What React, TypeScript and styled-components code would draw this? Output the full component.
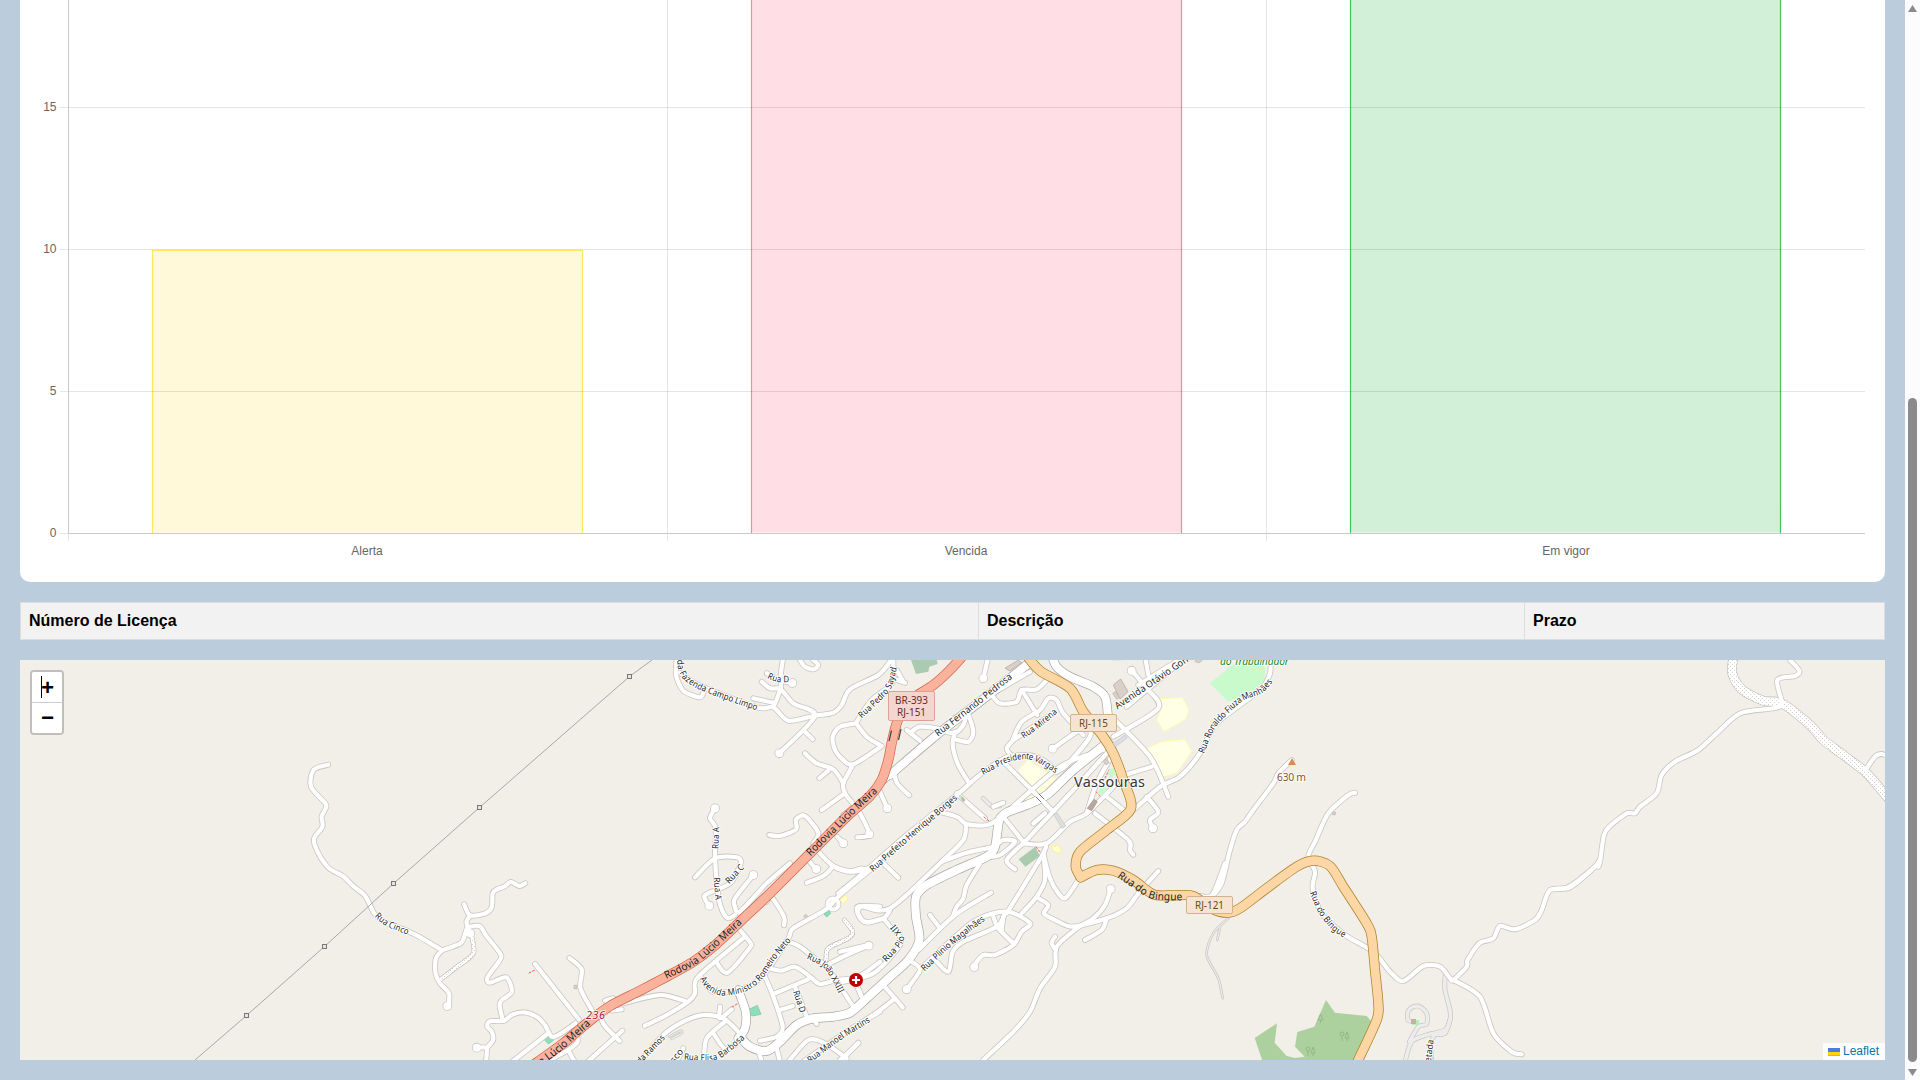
import React from "react";
import styled, { createGlobalStyle } from "styled-components";

const GlobalStyle = createGlobalStyle`
  * { box-sizing: border-box; }
  html, body { margin: 0; padding: 0; overflow: hidden; }
  body { background: #bbccdc; font-family: "Liberation Sans", Arial, sans-serif; color: #000; }
`;

const Screen = styled.div`
  display: flex;
  width: 1920px;
  height: 1080px;
  overflow: hidden;
`;

const Content = styled.main`
  flex: 1;
  min-width: 0;
  display: flex;
  flex-direction: column;
  gap: 20px;
  padding: 0 20px 20px;
`;

const ChartCard = styled.section`
  height: 582px;
  background: #fff;
  border-radius: 0 0 10px 10px;
  overflow: hidden;
`;

const ChartSvg = styled.svg`
  display: block;
  font: 12px "Liberation Sans", Arial, sans-serif;
  fill: #666;
`;

const LicenseTable = styled.div`
  display: grid;
  grid-template-columns: 957px 546px 1fr;
  height: 38px;
  border: 1px solid #ddd;
  background: #f2f2f2;
`;

const HeaderCell = styled.div<{ $divided?: boolean }>`
  display: flex;
  align-items: center;
  padding: 0 8px 1px;
  font-size: 16px;
  font-weight: 700;
  line-height: 18px;
  border-left: ${(p) => (p.$divided ? "1px solid #ddd" : "0")};
`;

const MapPane = styled.section`
  position: relative;
  height: 400px;
  background: #f2efe9;
  overflow: hidden;
`;

const MapSvg = styled.svg`
  display: block;
  width: 1865px;
  height: 400px;
  font-family: "Noto Sans", sans-serif;
`;

const ZoomControl = styled.div`
  position: absolute;
  left: 10px;
  top: 10px;
  width: 34px;
  border: 2px solid rgba(0, 0, 0, 0.2);
  border-radius: 4px;
  background-clip: padding-box;
`;

const ZoomButton = styled.div<{ $top?: boolean }>`
  display: flex;
  align-items: center;
  justify-content: center;
  height: ${(p) => (p.$top ? 31 : 30)}px;
  padding-top: ${(p) => (p.$top ? 5 : 4)}px;
  background: #fff;
  border-bottom: ${(p) => (p.$top ? "1px solid #ccc" : "0")};
  border-radius: ${(p) => (p.$top ? "2px 2px 0 0" : "0 0 2px 2px")};
  font: bold 22px/26px "Liberation Mono", monospace;
  text-indent: 1px;
`;

const Caret = styled.span`
  position: absolute;
  left: 9px;
  top: 4px;
  width: 1px;
  height: 22px;
  background: #000;
`;

const Attribution = styled.div`
  position: absolute;
  right: 0;
  bottom: 0;
  display: flex;
  align-items: center;
  gap: 3px;
  width: 62px;
  height: 17px;
  padding-left: 5px;
  background: rgba(255, 255, 255, 0.8);
  color: #0078a8;
  font-size: 12px;
  line-height: 17px;
`;

const Flag = styled.span`
  width: 12px;
  height: 8px;
  background: linear-gradient(#4c7be1 50%, #ffd500 50% 88%, #e0bc00 88%);
`;

const Scrollbar = styled.aside`
  width: 15px;
  height: 1080px;
  padding: 5px 3px 4px;
  display: flex;
  flex-direction: column;
  align-items: center;
  background: #fcfcfc;
`;

const Arrow = styled.span<{ $down?: boolean }>`
  width: 9px;
  height: 7px;
  background: #8b8b8b;
  clip-path: ${(p) => (p.$down ? "polygon(0 0, 100% 0, 50% 100%)" : "polygon(50% 0, 100% 100%, 0 100%)")};
`;

const Thumb = styled.span`
  width: 9px;
  height: 664px;
  margin: 386px 0 7px;
  border-radius: 5px;
  background: #8b8b8b;
`;

/* ---------- chart ---------- */

const bars = [
  { label: "Alerta", x: 152, top: 250, fill: "#fff8d9", line: "#ffe566", cx: 367 },
  { label: "Vencida", x: 751, top: -20, fill: "#ffdfe5", line: "#ff86a0", cx: 966 },
  { label: "Em vigor", x: 1350, top: -20, fill: "#d2f0d7", line: "#42c55c", cx: 1566 },
];
const ticks = [
  { value: 15, y: 107 },
  { value: 10, y: 249 },
  { value: 5, y: 391 },
  { value: 0, y: 533 },
];

const BarChart = () => (
  <ChartSvg width="1865" height="582" viewBox="20 0 1865 582">
    {bars.map((b) => (
      <g key={b.label}>
        <rect x={b.x} y={b.top - 0.5} width={431} height={533 - b.top} fill={b.fill} />
        <path
          d={`M${b.x + 0.5} 533V${b.top + 0.5}H${b.x + 430.5}V533`}
          fill="none"
          stroke={b.line}
          strokeWidth="1.2"
        />
        <text x={b.cx} y="555" textAnchor="middle">{b.label}</text>
      </g>
    ))}
    {ticks.map((t) => (
      <g key={t.value}>
        <rect x="60" y={t.y} width={t.value ? 1805 : 8} height="1" fill="rgba(0,0,0,.1)" />
        <text x="56.5" y={t.y + 4} textAnchor="end">{t.value}</text>
      </g>
    ))}
    {[667, 1266].map((x) => (
      <rect key={x} x={x} y="0" width="1" height="541" fill="rgba(0,0,0,.1)" />
    ))}
    <rect x="68" y="533" width="1" height="8" fill="#e5e5e5" />
    <rect x="68" y="0" width="1" height="533" fill="#c9c9c9" />
    <rect x="68" y="533" width="1797" height="1" fill="#c9c9c9" />
  </ChartSvg>
);

/* ---------- map ---------- */

type Pt = [number, number];
type SectorId = "west" | "rodovia" | "centro" | "bingue" | "leste";

// Each sector has its own local grid; kx and ky are grid units per screen pixel.
const sectors: Record<SectorId, { x: number; y: number; kx: number; ky: number }> = {
  west: { x: 0, y: 560, kx: 2.45, ky: 3 },
  rodovia: { x: 480, y: 650, kx: 3, ky: 3 },
  centro: { x: 840, y: 650, kx: 3, ky: 3 },
  bingue: { x: 1200, y: 650, kx: 3, ky: 3 },
  leste: { x: 1560, y: 640, kx: 3, ky: 3 },
};

const project = (s: SectorId, pts: string): Pt[] =>
  pts.split(" ").map((p) => {
    const [x, y] = p.split(",").map(Number);
    const o = sectors[s];
    return [o.x + x / o.kx, o.y + y / o.ky];
  });

const smooth = (p: Pt[]): string => {
  let d = `M${p[0][0].toFixed(1)} ${p[0][1].toFixed(1)}`;
  const t = 0.14;
  for (let i = 0; i < p.length - 1; i++) {
    const a = p[Math.max(i - 1, 0)], b = p[i], c = p[i + 1], e = p[Math.min(i + 2, p.length - 1)];
    const n = [
      b[0] + (c[0] - a[0]) * t, b[1] + (c[1] - a[1]) * t,
      c[0] - (e[0] - b[0]) * t, c[1] - (e[1] - b[1]) * t,
      c[0], c[1],
    ].map((v) => v.toFixed(1));
    d += `C${n.join(" ")}`;
  }
  return d;
};

const lengthOf = (p: Pt[]) =>
  p.slice(1).reduce((s, q, i) => s + Math.hypot(q[0] - p[i][0], q[1] - p[i][1]), 0);

const minor: Record<SectorId, string[]> = {
  west: [
    "804,614 768,630 762,680 797,730 798,745 788,770 790,800 769,838 780,880 806,925 840,948 865,978 895,1008 918,1062 950,1090 1000,1114 1030,1132 1083,1171",
    "1083,1171 1130,1148 1145,1105 1175,1098 1190,1125 1225,1180 1225,1200 1195,1250 1200,1268 1240,1252 1254,1295 1230,1320 1224,1335 1232,1382",
    "1137,1033 1152,1066 1190,1060 1205,1040 1207,1000 1218,988 1235,980 1252,966 1272,978 1287,970",
    "1152,1066 1143,1085 1147,1105",
    "1083,1171 1068,1195 1067,1240 1078,1270 1100,1300 1099,1330",
    "1190,1510 1192,1465 1168,1464",
    "1192,1465 1208,1440 1205,1415 1194,1400 1200,1384 1235,1382 1255,1364 1285,1357 1315,1370 1335,1395 1352,1430 1375,1420 1410,1390",
    "1250,1510 1345,1418", "1311,1212 1418,1378", "1395,1194 1425,1228 1422,1285 1450,1350",
    "1470,1360 1480,1395 1518,1443", "1440,1505 1525,1412", "1340,1505 1392,1470 1415,1445 1412,1420", "1392,1470 1410,1510",
  ],
  rodovia: [
    "590,28 588,75 610,122 660,142 672,120", "600,68 655,105 830,172 880,172 925,212 1000,198 1060,188 1085,165 1110,118 1195,75 1230,35 1240,20",
    "910,20 902,75 902,115 880,172", "860,70 895,90 935,98", "845,95 870,115 902,118 940,160 1005,198 898,310", "972,242 998,268",
    "880,158 820,145", "960,30 975,50 1000,58 1015,45 1000,30", "1250,60 1270,95", "1130,215 1175,150 1235,100 1240,30",
    "1128,220 1080,230 1058,260 1065,300 1090,330 1120,343 1205,288", "1128,220 1160,260 1200,285", "1120,343 1090,400 1095,430 1118,460",
    "975,310 1010,340 1060,358 1090,400", "1045,362 1018,385", "1095,430 1025,480", "1135,480 1168,552 1132,562", "1072,560 1090,580",
    "868,555 900,558 948,538 948,508 975,498 1015,548 1000,580", "705,475 690,505 707,535 705,625 715,740 728,785 745,805 765,795",
    "645,682 705,625 770,622 782,640 750,700 680,732 674,745 688,768", "820,675 765,745 765,770 780,785 860,700 930,640",
    "860,755 875,742 912,800 912,826", "985,630 1010,660", "1010,600 1060,648 1120,665 1165,655", "980,698 1030,678 1060,648",
    "780,840 812,880 808,895 742,968 708,935", "795,860 655,980 645,1030 625,1055 560,1095 495,1127", "430,1060 540,1035 620,1055",
    "375,1052 400,1045", "395,1082 425,1078",
    "1200,635 1080,735 1035,780 940,835 925,865 850,975 780,1020 700,1025 665,985", "925,875 960,890 1010,930 1040,950 1120,1070",
    "870,955 905,962 945,950 990,980 1020,1002 1070,990 1120,985 1160,965 1200,935", "855,980 880,1040 908,1130 890,1160 840,1172",
    "880,1032 985,988", "945,1010 980,1100", "900,1080 938,1068", "1130,1005 1145,1040", "1050,940 1100,915 1165,887",
    "480,1235 550,1155 610,1115 670,1095 730,1105 770,1140 800,1180", "720,1070 720,1105 755,1078", "735,1115 680,1165 672,1230", "700,1150 740,1200 790,1160",
    "590,1235 610,1195", "925,1235 985,1170 1035,1180 1100,1225", "970,1235 1100,1145 1200,1085", "1090,1225 1135,1178", "1000,1105 1010,1122", "835,1200 845,1235", "890,1195 900,1235",
    "1200,770 1150,768 1132,785 1145,810 1165,818 1200,808",
  ],
  centro: [
    "445,20 430,85", "200,240 240,272", "215,245 240,230 290,235 340,250 370,225 382,190 400,245 385,275 345,268", "345,245 338,285 355,345 388,400",
    "160,360 172,400 208,436", "120,425 142,475", "455,135 480,160 530,155 545,120 590,118 625,85", "545,120 592,195", "570,65 510,100 460,130",
    "520,265 545,215 600,180 625,145 650,150 670,190 730,255", "520,270 640,190", "520,270 500,295 510,312", "640,295 730,235 750,260 680,345 650,365",
    "-5,730 80,660 200,555 350,435 425,370 500,322 560,315 610,330 650,365", "-10,655 30,665 65,655 80,665", "130,640 175,683",
    "350,430 435,505", "295,485 350,500 380,522 440,525 490,495 660,350 790,300", "485,330 600,445 640,485", "490,500 550,575", "460,470 490,458",
    "580,520 615,490", "550,580 700,420 800,310", "550,580 620,580 690,515 740,490 830,400", "615,580 610,610 500,790", "550,580 500,630 525,658",
    "305,635 380,608 460,590 490,570 525,575 480,615 440,622", "378,525 370,570 305,635 150,775 60,768 52,785 75,815 130,805 150,780",
    "130,805 155,835 180,860 180,885 130,945 90,975 -10,1000", "420,640 380,705 370,745 350,770 340,795", "235,900 345,795 453,728", "270,795 300,835",
    "610,610 625,670 645,715 675,745 715,690", "610,610 615,690 590,740 545,790", "590,742 625,765 612,790 655,815 700,830 800,805 860,775 895,730 955,663",
    "812,717 795,765 760,805 715,832 650,890 645,950 600,1015 570,1085 520,1145 430,1230", "645,860 635,880 648,900", "800,805 785,840 735,870",
    "248,950 400,815 500,785 570,820 545,845 520,885 465,915 430,915 403,945", "285,930 325,965 338,905 370,875 470,830 495,790", "460,800 475,835 520,880", "490,800 485,840",
    "215,935 240,960 200,1018", "130,1005 188,1072", "165,1045 100,1095 -10,1165", "0,1230 55,1180", "50,1005 65,1040", "0,905 85,885",
    "800,185 930,320 985,440", "820,260 955,175 920,115 875,62", "895,105 1080,-10", "860,170 1040,20", "925,75 915,20", "820,22 840,22", "165,88 195,98",
    "855,375 935,350", "870,490 960,410 1020,380 1080,310 1130,220 1260,120 1290,70 1290,20", "920,440 955,485 930,510 940,535", "800,440 850,480", "765,490 865,570 870,600 880,614",
    "820,310 770,400 740,490", "1120,735 1145,700 1170,600 1190,540 1215,515 1240,480 1300,400 1315,370 1355,330",
  ],
  bingue: [
    "465,428 445,435 385,490 345,575 325,620 345,665 338,715 365,790 435,855 520,905 570,965 610,993 670,948 720,950 750,985 760,990 800,950 803,930 838,880 880,865 900,828 945,838 1005,810 1025,780 1050,720 1110,712 1180,655 1200,630",
    "760,990 840,1040 880,1150 935,1205 965,1213", "0,738 30,740 45,720 75,640",
  ],
  leste: [
    "115,680 120,665 132,585 150,558 200,520 225,520 240,500 290,460 305,405 345,365 415,330 470,280 540,220 640,205 665,190 652,120 705,108 718,92 690,60",
    "-20,748 20,743 50,725 115,672", "918,388 945,350 965,342 985,350",
  ],
};

const culs: [SectorId, string][] = [
  ["west", "1096,1338 1168,1463 1152,1120"],
  ["rodovia", "705,475 898,310 937,99 688,767 820,675 1009,657 1090,580 1168,553 1166,887"],
  ["centro", "430,85 142,475 875,62 638,296 939,535 812,717 403,951 200,1018"],
];

const secondary: [SectorId, string, number][] = [
  ["centro", "150,375 290,255 420,155 560,45", 8],
  ["centro", "635,15 650,50 690,80 760,110 795,140 803,190", 8],
  ["centro", "800,280 700,360 620,435 560,465 505,485 478,510 465,590 440,620 350,660 260,705 228,740 228,800 238,870 205,930 140,990 80,1045 30,1088 -20,1100 -80,1105 -130,1125 -180,1175 -220,1203 -270,1190 -300,1160", 8.2],
  ["rodovia", "775,1020 797,1085 795,1135 775,1165", 8],
  ["rodovia", "1090,495 1200,405 1250,360", 3.8],
];

const orange: string[] = [
  "555,10 600,62 690,115 730,185 790,260 820,310 850,390 873,475 800,540 720,605 707,650 722,682",
  "722,682 770,660 820,662 880,690 940,733 1000,736 1060,738 1120,778 1165,788 1200,775 1280,715 1370,650 1420,632 1470,648 1510,710 1580,820 1595,860 1605,960 1615,1060 1610,1110 1550,1240",
];

const trunk = "160,1245 250,1180 320,1120 390,1068 480,1022 560,980 640,935 700,890 780,815 870,730 1000,600 1100,500 1170,438 1205,390 1225,330 1238,265 1258,200 1300,145 1360,105 1410,60 1455,10";

type Area = [SectorId, string, string, string?];

const areas: Area[] = [
  ["centro", "213,30 228,72 265,65 268,50 293,42 290,28", "#aacbaf"],
  ["centro", "1110,100 1165,55 1200,30 1272,28 1276,80 1245,125 1165,155", "#c8facc"],
  ["centro", "950,147 1028,142 1047,180 1038,208 972,245 950,210 960,185", "#ffffe5", "#fff8a5"],
  ["centro", "920,295 965,275 1035,268 1055,305 1010,370 955,385 940,340", "#ffffe5", "#fff8a5"],
  ["centro", "565,328 648,387 600,433 533,362", "#ffffe5", "#fff8a5"],
  ["centro", "548,455 610,412 620,420 575,455", "#ffffe5", "#fff8a5"],
  ["centro", "820,105 842,87 864,125 840,147", "#d9d0c9", "#b8a89c"],
  ["centro", "818,130 826,125 838,142 830,148", "#d9d0c9", "#c5b8af"],
  ["centro", "495,55 535,30 545,38 510,63", "#d9d0c9", "#b8a89c"],
  ["centro", "1065,35 1070,28 1090,28 1078,38", "#d9d0c9", "#c5b8af"],
  ["bingue", "164,1164 231,1120 224,1178 260,1218 285,1224 314,1220 285,1190 292,1146 343,1130 378,1050 405,1088 500,1098 515,1115 465,1235 188,1235", "#add19e"],
  ["rodovia", "803,1080 832,1066 843,1093 815,1098", "#8cdfba", "#76cda6"],
  ["rodovia", "192,1168 208,1158 221,1170 206,1182", "#8cdfba", "#76cda6"],
  ["rodovia", "971,798 978,793 986,803 980,809", "#d9d0c9", "#c5b8af"],
  ["rodovia", "1086,710 1094,705 1099,713 1091,718", "#d9d0c9", "#c5b8af"],
  ["rodovia", "282,1006 291,1006 291,1016 282,1016", "#d9d0c9", "#c5b8af"],
  ["bingue", "397,486 406,486 406,494 397,494", "#d9d0c9", "#c5b8af"],
  ["bingue", "697,1200 701,1200 701,1235 694,1235", "#aad3df"],
];

const overlays: Area[] = [
  ["centro", "805,362 820,352 829,372 808,388", "#c8facc"],
  ["centro", "770,428 790,404 802,418 784,440", "#c8facc"],
  ["centro", "742,475 762,448 772,455 755,482", "#b8a99e", "#a8988c"],
  ["centro", "790,335 800,325 808,338 798,345", "#d9d0c9", "#c5b8af"],
  ["centro", "820,280 855,255 862,264 826,290", "#dddde8", "#c8c8d4"],
  ["centro", "640,492 652,490 678,528 666,535", "#dedede", "#c9c9c9"],
  ["centro", "360,443 368,440 377,450 370,457", "#c5b8af"],
  ["centro", "356,436 363,434 366,440 358,443", "#aef0b5"],
  ["centro", "536,628 586,590 600,618 556,650", "#aacbaf"],
  ["centro", "632,585 645,590 655,585 665,602 655,610 640,602", "#ffffd0", "#fff080"],
  ["centro", "0,748 18,736 24,748 8,762", "#ffffd0", "#fff080"],
  ["rodovia", "1032,792 1048,782 1052,790 1040,801", "#8cdfba", "#76cda6"],
];

const service: [SectorId, string, number][] = [
  ["bingue", "735,980 735,1020 750,1080 750,1110 735,1140 680,1155 635,1175 615,1235", 3.6],
  ["bingue", "628,1175 655,1130 680,1122 680,1090 660,1070 640,1070 624,1085 624,1110 640,1115", 3.4],
  ["bingue", "750,1110 735,1150 700,1160 685,1240", 3.6],
  ["bingue", "85,805 40,850 20,915 55,985 68,1045", 1.2],
  ["bingue", "60,830 52,870", 1.2],
  ["rodovia", "568,1160 600,1143 605,1150 575,1166", 1.2],
  ["centro", "430,445 455,468 480,468", 3],
];

const dotted: [SectorId, string, number][] = [
  ["leste", "520,50 517,100 545,148 610,182 665,190 750,255 790,300 850,345 918,398 985,475", 8.5],
  ["rodovia", "1093,810 1118,845 1105,865 1045,895 1038,930", 3.6],
  ["west", "1155,1125 1160,1180 1120,1220 1080,1258", 3.6],
];

type StreetLabel = { s: SectorId; p: string; t: string; size?: number; halo?: string };
const labels: StreetLabel[] = [
  { s: "rodovia", p: "554,977 640,935 700,885 780,810", t: "Rodovia Lúcio Meira", size: 10.6, halo: "none" },
  { s: "rodovia", p: "984,611 1100,497 1187,416", t: "Rodovia Lúcio Meira", size: 10.6, halo: "none" },
  { s: "rodovia", p: "172,1242 240,1190 326,1113", t: "ia Lúcio Meira", size: 10.6, halo: "none" },
  { s: "centro", p: "838,672 890,708 940,736 1028,740", t: "Rua do Bingue", size: 10.6, halo: "none" },
  { s: "west", p: "923,1063 950,1090 1002,1116", t: "Rua Cinco" },
  { s: "rodovia", p: "600,30 610,72 650,104 720,133 834,173", t: "da Fazenda Campo Limpo" },
  { s: "rodovia", p: "865,76 892,86 929,87", t: "Rua D" },
  { s: "centro", p: "60,198 110,150 145,110 162,50", t: "Rua Pedro Sayad" },
  { s: "centro", p: "288,252 400,165 513,75", t: "Rua Fernando Pedrosa", size: 9.6 },
  { s: "centro", p: "547,258 600,220 647,180", t: "Rua Mirena" },
  { s: "centro", p: "425,367 500,328 560,318 600,330 652,362", t: "Rua Presidente Vargas" },
  { s: "centro", p: "93,659 200,565 347,439", t: "Rua Prefeito Henrique Borges" },
  { s: "centro", p: "827,170 920,107 1042,24", t: "Avenida Otávio Gon", size: 9.6 },
  { s: "bingue", p: "3,308 40,225 120,147 180,122 212,88", t: "Rua Ronaldo Fiuza Manhães" },
  { s: "bingue", p: "338,725 365,785 400,830 437,856", t: "Rua do Bingue" },
  { s: "rodovia", p: "706,596 708,530", t: "Rua A" },
  { s: "rodovia", p: "710,683 716,750", t: "Rua A" },
  { s: "rodovia", p: "741,696 787,646", t: "Rua C" },
  { s: "rodovia", p: "667,982 690,1012 730,1028 795,1015 840,980 880,920 928,864", t: "Avenida Ministro Romeiro Neto" },
  { s: "rodovia", p: "984,918 1040,948 1086,1028", t: "Rua João XXIII" },
  { s: "rodovia", p: "948,1022 970,1087", t: "Rua D" },
  { s: "centro", p: "133,929 178,880 180,858 155,826", t: "Rua Pio XII" },
  { s: "centro", p: "247,958 330,880 431,802", t: "Rua Plinio Magalhães" },
  { s: "rodovia", p: "985,1232 1080,1160 1168,1106", t: "Rua Manoel Martins" },
  { s: "rodovia", p: "613,1220 700,1222 740,1200 790,1158", t: "Rua Elisa Barbosa" },
  { s: "rodovia", p: "474,1236 550,1158", t: "da Ramos" },
  { s: "rodovia", p: "570,1240 605,1198", t: "isco" },
  { s: "bingue", p: "683,1235 692,1168", t: "etada" },
];

const Shield = ({ x, y, w, h, lines, fg, bg, line }: {
  x: number; y: number; w: number; h: number; lines: string[]; fg: string; bg: string; line: string;
}) => (
  <g>
    <rect x={x} y={y} width={w} height={h} rx="1.5" fill={bg} stroke={line} />
    {lines.map((t, i) => (
      <text
        key={t}
        x={x + w / 2}
        y={y + 12.9 + i * 12}
        fontSize="10.4"
        textAnchor="middle"
        textLength={t.startsWith("BR") ? 33 : 29}
        lengthAdjust="spacingAndGlyphs"
        fill={fg}
      >
        {t}
      </text>
    ))}
  </g>
);

const Tree = ({ x, y }: { x: number; y: number }) => (
  <g fill="none" stroke="#8fb582" strokeWidth="0.9">
    <circle cx={x} cy={y - 3} r="2" />
    <path d={`M${x} ${y - 1}v5M${x + 5} ${y - 5}l-2 6h4zM${x + 5} ${y + 1}v3`} />
  </g>
);

const Polygon = ({ a }: { a: Area }) => (
  <polygon points={project(a[0], a[1]).map((p) => p.join(",")).join(" ")} fill={a[2]} stroke={a[3] || "none"} strokeWidth="0.8" />
);

const TownMap = () => {
  const streets = (Object.keys(minor) as SectorId[]).flatMap((s) => minor[s].map((r) => smooth(project(s, r))));
  const ends = culs.flatMap(([s, p]) => project(s, p));
  const orangePaths = orange.map((o) => smooth(project("centro", o)));
  const trunkPath = smooth(project("rodovia", trunk));
  return (
    <MapSvg viewBox="20 660 1865 400">
      <defs>
        <pattern id="gravel" width="4" height="4" patternUnits="userSpaceOnUse">
          <rect width="4" height="4" fill="#fff" />
          <path d="M0 0h1v1h-1zM2 2h1v1h-1z" fill="#d5d3cf" />
        </pattern>
      </defs>
      {areas.map((a, i) => <Polygon key={i} a={a} />)}
      <Tree x={1342} y={1037} />
      <Tree x={1308} y={1052} />
      <path d="M1320.5 1014l-2.5 6h5zM1320.5 1020v3" fill="none" stroke="#8fb582" strokeWidth=".9" />
      <g fill="none" strokeLinecap="round" strokeLinejoin="round">
        {service.map(([s, p, w], i) => <path key={i} d={smooth(project(s, p))} stroke="#c8c6c2" strokeWidth={w + 1.4} />)}
        {service.map(([s, p, w], i) => <path key={i} d={smooth(project(s, p))} stroke="#ececec" strokeWidth={w} />)}
        {streets.map((d, i) => <path key={i} d={d} stroke="#c8c6c2" strokeWidth="5.8" />)}
        {ends.map((p, i) => <circle key={i} cx={p[0]} cy={p[1]} r="4.8" fill="#c8c6c2" />)}
        {dotted.map(([s, p, w], i) => <path key={i} d={smooth(project(s, p))} stroke="#bbb9b5" strokeWidth={w + 1.2} />)}
        {secondary.map(([s, p, w], i) => <path key={i} d={smooth(project(s, p))} stroke="#a9a8a6" strokeWidth={w + 1.4} />)}
        <circle cx="833" cy="904" r="5.5" stroke="#c8c6c2" strokeWidth="5.4" />
        {dotted.map(([s, p, w], i) => <path key={i} d={smooth(project(s, p))} stroke="url(#gravel)" strokeWidth={w} />)}
        {streets.map((d, i) => <path key={i} d={d} stroke="#fff" strokeWidth="4.2" />)}
        {ends.map((p, i) => <circle key={i} cx={p[0]} cy={p[1]} r="4" fill="#fff" />)}
        {secondary.map(([s, p, w], i) => <path key={i} d={smooth(project(s, p))} stroke="#fff" strokeWidth={w} />)}
        <circle cx="833" cy="904" r="5.5" stroke="#fff" strokeWidth="4" />
        <path d={trunkPath} stroke="#d9604a" strokeWidth="10.2" />
        <path d={trunkPath} stroke="#f9b29c" strokeWidth="8.8" />
        {orangePaths.map((d, i) => <path key={i} d={d} stroke="#b0812a" strokeWidth="10.2" />)}
        {orangePaths.map((d, i) => <path key={i} d={d} stroke="#fcd6a4" strokeWidth="8.7" />)}
        <path d="M889 741l2.5-10.5M898.500 740l2.500-11" stroke="#444" strokeWidth="1.2" strokeLinecap="butt" />
        <path d="M1036 797l5 5M1039 794l5 5" stroke="#555" strokeWidth=".8" />
        <path d="M984 817l5 4M1036 847l4 5M529 973l6-3M732 1007l5-3M1105 778l4-8M1096 792l4 4" stroke="#ff5a4d" strokeWidth="1" strokeDasharray="2 2" />
      </g>
      {overlays.map((a, i) => <Polygon key={i} a={a} />)}
      <path d="M195 1060L246.5 1015.5 324.5 946.5 393.5 883.5 479.5 807.5 629.5 676.5 652 660" fill="none" stroke="#aaa8a4" />
      {[[246, 1015], [324, 946], [393, 883], [479, 807], [629, 676]].map(([x, y]) => (
        <rect key={x} x={x - 1.5} y={y - 1.5} width="4" height="4" fill="#e6e4df" stroke="#777" strokeWidth="1" />
      ))}
      {labels.map((l, i) => {
        const pts = project(l.s, l.p);
        return (
          <g key={i}>
            <path id={`street-${i}`} d={smooth(pts)} fill="none" />
            <text
              fontSize={l.size || 9}
              fill="#222"
              stroke={l.halo || "#fff"}
              strokeWidth="2"
              strokeLinejoin="round"
              paintOrder="stroke"
              dy=".35em"
            >
              <textPath href={`#street-${i}`} textLength={lengthOf(pts) - 0.5} lengthAdjust="spacingAndGlyphs">{l.t}</textPath>
            </text>
          </g>
        );
      })}
      <Shield x={888.5} y={691.5} w={46} h={29} lines={["BR-393", "RJ-151"]} fg="#6b2a1c" bg="#f4d5cf" line="#dfa193" />
      <Shield x={1070.5} y={714.5} w={46} h={17} lines={["RJ-115"]} fg="#674a12" bg="#f6e4d0" line="#d2b18b" />
      <Shield x={1186.5} y={896.5} w={46} h={17} lines={["RJ-121"]} fg="#674a12" bg="#f6e4d0" line="#d2b18b" />
      <g stroke="#fff" strokeWidth="2" strokeOpacity=".8" strokeLinejoin="round" paintOrder="stroke">
        <text x="1074" y="786.5" fontSize="14.4" fill="#333" textLength="71">Vassouras</text>
        <text x="1277" y="780.5" fontSize="10.4" fill="#84552b" textLength="29">630 m</text>
        <text x="586" y="1018.5" fontSize="10.8" fontStyle="italic" fill="#a5203a" textLength="19">236</text>
        <text x="1220" y="665" fontSize="10.4" fontStyle="italic" fill="#108a20" textLength="69">do Trabalhador</text>
      </g>
      <path d="M1292 758l4 7h-8z" fill="#d08f55" />
      <circle cx="856" cy="980" r="7" fill="#bf0000" />
      <path d="M856 976v8M852 980h8" stroke="#fff" strokeWidth="2.2" />
      <path d="M1411 1019h5v5h-5z" fill="#c5b0a6" />
      <path d="M1416 1020h3v5h-7v-1h4z" fill="#aef0b5" />
    </MapSvg>
  );
};

export default function App() {
  return (
    <>
      <GlobalStyle />
      <Screen>
        <Content>
          <ChartCard><BarChart /></ChartCard>
          <LicenseTable>
            <HeaderCell>Número de Licença</HeaderCell>
            <HeaderCell $divided>Descrição</HeaderCell>
            <HeaderCell $divided>Prazo</HeaderCell>
          </LicenseTable>
          <MapPane>
            <TownMap />
            <ZoomControl>
              <ZoomButton $top>+</ZoomButton>
              <ZoomButton>−</ZoomButton>
              <Caret />
            </ZoomControl>
            <Attribution><Flag />Leaflet</Attribution>
          </MapPane>
        </Content>
        <Scrollbar>
          <Arrow />
          <Thumb />
          <Arrow $down />
        </Scrollbar>
      </Screen>
    </>
  );
}
